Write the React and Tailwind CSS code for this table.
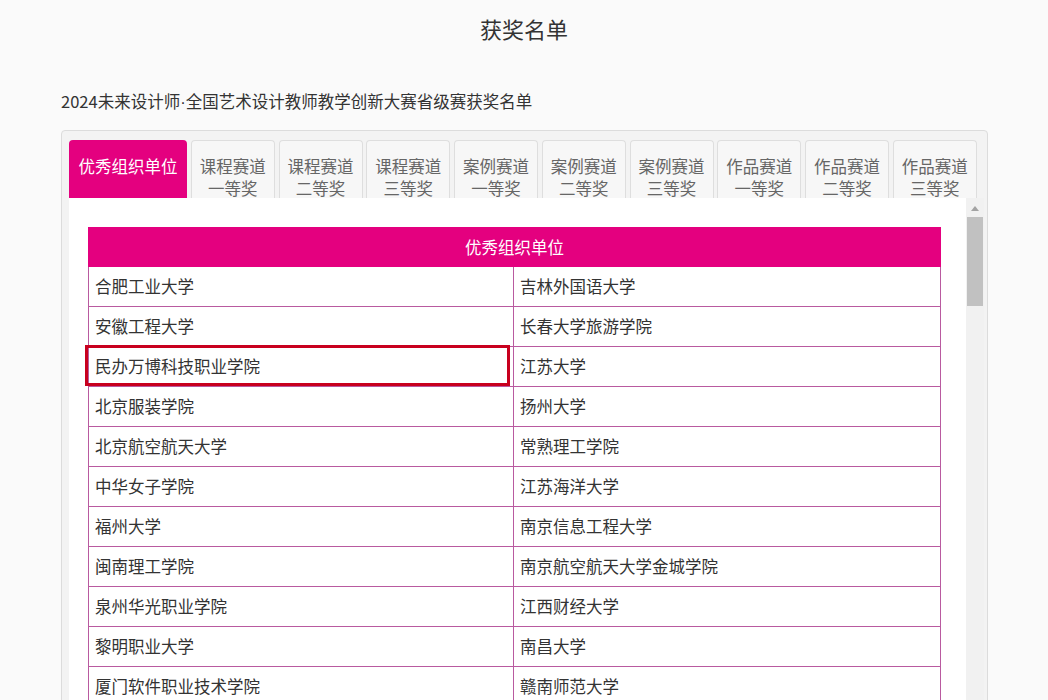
import React from "react";

const tabs = [
  ["课程赛道", "一等奖"],
  ["课程赛道", "二等奖"],
  ["课程赛道", "三等奖"],
  ["案例赛道", "一等奖"],
  ["案例赛道", "二等奖"],
  ["案例赛道", "三等奖"],
  ["作品赛道", "一等奖"],
  ["作品赛道", "二等奖"],
  ["作品赛道", "三等奖"],
];

const rows = [
  ["合肥工业大学", "吉林外国语大学"],
  ["安徽工程大学", "长春大学旅游学院"],
  ["民办万博科技职业学院", "江苏大学"],
  ["北京服装学院", "扬州大学"],
  ["北京航空航天大学", "常熟理工学院"],
  ["中华女子学院", "江苏海洋大学"],
  ["福州大学", "南京信息工程大学"],
  ["闽南理工学院", "南京航空航天大学金城学院"],
  ["泉州华光职业学院", "江西财经大学"],
  ["黎明职业大学", "南昌大学"],
  ["厦门软件职业技术学院", "赣南师范大学"],
  ["华南理工大学", "江西师范大学"],
];

export default function App() {
  return (
    <div
      className="h-[700px] overflow-hidden bg-[#fafafa] text-[#333]"
      style={{ fontFamily: '"Noto Sans CJK SC", "Noto Sans", sans-serif' }}
    >
      <h1 className="pt-[15px] text-center text-[22px] leading-[26px] font-normal">
        获奖名单
      </h1>

      <div className="pl-[61px] pr-[60px]">
        <p className="mt-[48px] text-[16.5px] leading-[24px]">
          2024未来设计师
          <span style={{ fontFamily: '"Liberation Sans", sans-serif' }}>·</span>
          全国艺术设计教师教学创新大赛省级赛获奖名单
        </p>

        {/* panel */}
        <div className="mt-[16px] w-[927px] rounded-t-[4px] border border-[#dcdcdc] bg-[#f3f3f3] pt-[9px] pl-[7px] pr-[3px]">
          <div className="flex gap-[3.75px]">
            <div className="h-[58px] w-[118px] overflow-hidden rounded-t-[4px] bg-[#e4007f] pt-[15px] text-center text-[16.5px] leading-[22px] text-white">
              优秀组织单位
            </div>
            {tabs.map(([a, b], i) => (
              <div
                key={i}
                className="flex h-[58px] w-[84px] flex-col overflow-hidden rounded-t-[4px] border border-b-0 border-[#dedede] bg-[#f7f7f7] pt-[14px] text-center text-[16.5px] leading-[22px] text-[#666]"
              >
                <span>{a}</span>
                <span>{b}</span>
              </div>
            ))}
          </div>

          {/* content */}
          <div className="flex h-[520px] bg-white">
            <div className="flex-1 pl-[19px] pt-[29px]">
              <div className="relative w-[853px]">
                <div className="flex h-[40px] items-center justify-center bg-[#e4007f] text-[16.5px] text-white">
                  优秀组织单位
                </div>
                <div className="border-x border-[#b95aa0]">
                  {rows.map(([l, r], i) => (
                    <div
                      key={i}
                      className="grid h-[40px] grid-cols-[425px_1fr] border-b border-[#b95aa0] text-[16.5px]"
                    >
                      <div className="flex items-center border-r border-[#b95aa0] pl-[6px]">
                        {l}
                      </div>
                      <div className="flex items-center pl-[6px]">{r}</div>
                    </div>
                  ))}
                </div>
                <div className="absolute left-[-3px] top-[118px] h-[41px] w-[425px] border-[3px] border-[#c8001e]" />
              </div>
            </div>

            {/* scrollbar */}
            <div className="flex w-[18px] flex-col items-center bg-[#f1f1f1] pt-[8px]">
              <svg width="8" height="5" viewBox="0 0 8 5">
                <path d="M0 5 L4 0 L8 5 Z" fill="#a3a3a3" />
              </svg>
              <div className="mt-[6px] h-[89px] w-[16px] bg-[#c1c1c1]" />
            </div>
          </div>
        </div>
      </div>
    </div>
  );
}
